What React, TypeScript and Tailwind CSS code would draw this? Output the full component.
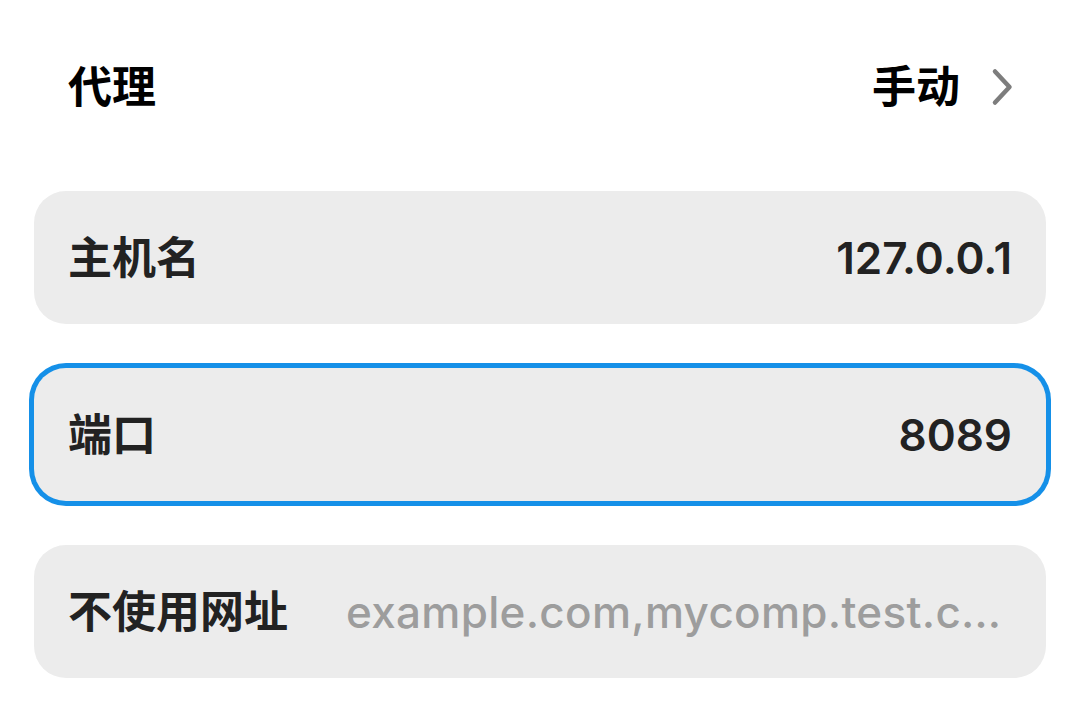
import { useState } from "react";

const FONT = { fontFamily: '"Inter", "Noto Sans CJK SC", sans-serif' };

function Chevron() {
  return (
    <svg width="24" height="38" viewBox="0 0 24 38" fill="none">
      <path
        d="M5 3.5 L19.5 19 L5 34.5"
        stroke="#7d7d7d"
        strokeWidth="4.5"
        strokeLinecap="round"
        strokeLinejoin="round"
      />
    </svg>
  );
}

interface FieldProps {
  label: string;
  value?: string;
  placeholder?: string;
  focused?: boolean;
}

function Field({ label, value, placeholder, focused }: FieldProps) {
  return (
    <div
      className={`flex h-[133px] items-center rounded-[32px] bg-[#ececec] pl-[34px] pr-[34px] ${
        focused ? "ring-[5px] ring-[#1590e8]" : ""
      }`}
    >
      <span className="shrink-0 text-[44px] font-semibold text-[#222222]">{label}</span>
      {value ? (
        <span className="ml-auto text-[44px] font-semibold text-[#222222]">{value}</span>
      ) : (
        <span className="ml-[58px] min-w-0 flex-1 whitespace-nowrap text-[44px] font-medium tracking-[0.3px] text-[#9d9d9d]">
          {placeholder}
        </span>
      )}
    </div>
  );
}

export default function App() {
  const [mode] = useState("手动");

  return (
    <div className="h-[726px] w-[1080px] overflow-hidden bg-white" style={FONT}>
      <div className="mt-[57px] flex h-[60px] items-center pl-[68px] pr-[66px]">
        <span className="text-[44px] font-bold text-black">代理</span>
        <div className="ml-auto flex items-center gap-[30px]">
          <span className="text-[44px] font-bold text-black">{mode}</span>
          <Chevron />
        </div>
      </div>

      <div className="mt-[74px] flex flex-col gap-[44px] px-[34px]">
        <Field label="主机名" value="127.0.0.1" />
        <Field label="端口" value="8089" focused />
        <Field label="不使用网址" placeholder="example.com,mycomp.test.c…" />
      </div>
    </div>
  );
}
